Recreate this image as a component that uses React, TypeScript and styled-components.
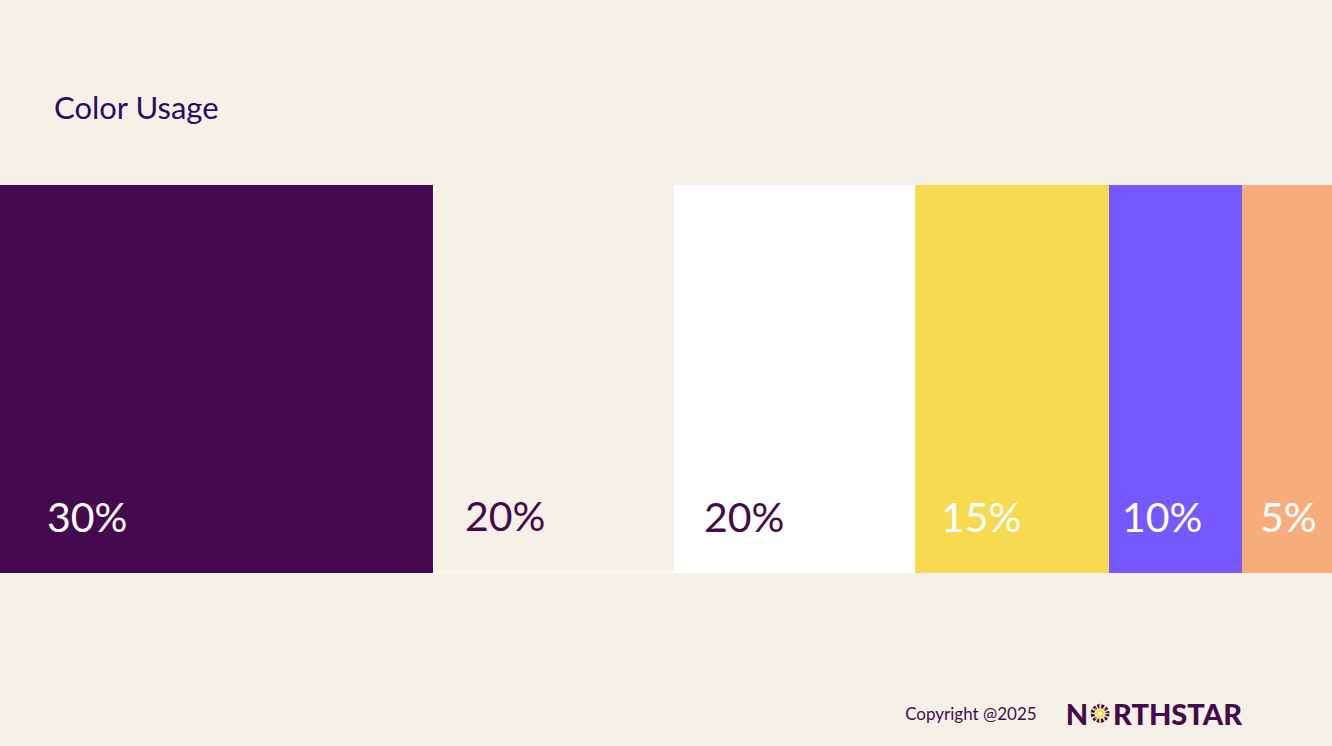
import React from "react";
import styled, { createGlobalStyle } from "styled-components";

const GlobalStyle = createGlobalStyle`
  html, body { margin: 0; padding: 0; background: #f5f1e7; }
  body { font-family: Lato, "Open Sans", sans-serif; }
`;

const Page = styled.div`
  width: 100%;
  height: 746px;
  display: flex;
  flex-direction: column;
  background: #f5f1e7;
  overflow: hidden;
`;

const Header = styled.header`
  height: 185px;
  box-sizing: border-box;
  padding: 89px 0 0 54px;
`;

const Title = styled.h1`
  margin: 0;
  font-family: Lato, sans-serif;
  font-weight: 400;
  font-size: 31px;
  line-height: 1.2;
  color: #2a0b6b;
`;

const Bar = styled.div`
  display: flex;
  height: 388px;
`;

const Segment = styled.div<{ $bg: string; $w: number; $pad: number; $fg: string; $edge?: boolean }>`
  flex: 0 0 ${(p) => p.$w}px;
  box-sizing: border-box;
  background: ${(p) => p.$bg};
  color: ${(p) => p.$fg};
  display: flex;
  align-items: flex-end;
  padding: 0 0 32px ${(p) => p.$pad}px;
  ${(p) => (p.$edge ? "border-left: 1px solid #fbf9f4; border-bottom: 1px solid #fdfcf9;" : "")}
`;

const Label = styled.span`
  font-family: Lato, sans-serif;
  font-size: 41px;
  font-weight: 400;
  line-height: 1.2;
`;

const Footer = styled.footer`
  margin-top: auto;
  display: flex;
  justify-content: flex-end;
  align-items: center;
  gap: 29px;
  padding: 0 90px 18px 0;
`;

const Copyright = styled.span`
  font-family: Lato, sans-serif;
  font-size: 17px;
  color: #45094d;
`;

const Logo = styled.div`
  display: flex;
  align-items: center;
  font-family: Lato, sans-serif;
  font-weight: 900;
  font-size: 29px;
  line-height: 1;
  color: #45094d;
`;

const StarIcon = styled.svg`
  width: 24px;
  height: 29px;
  margin: 0 1px 0 0;
`;

const segments = [
  { bg: "#45094d", fg: "#ffffff", w: 433, pad: 47, label: "30%" },
  { bg: "#f5f1e7", fg: "#45094d", w: 241, pad: 31, label: "20%", edge: true },
  { bg: "#ffffff", fg: "#45094d", w: 241, pad: 30, label: "20%" },
  { bg: "#f8da50", fg: "#ffffff", w: 194, pad: 26, label: "15%" },
  { bg: "#7558fe", fg: "#ffffff", w: 133, pad: 13, label: "10%" },
  { bg: "#f6ad7b", fg: "#ffffff", w: 90, pad: 18, label: "5%" },
];

const Star = () => (
  <StarIcon viewBox="0 0 24 28">
    <circle cx="12" cy="14" r="7.4" fill="none" stroke="#45094d" strokeWidth="4" strokeDasharray="2.6 1.4" />
    <polygon
      fill="#f8da50"
      points="12,0.3 13.2,11.2 18,8 14.8,12.8 23,14 14.8,15.2 18,20 13.2,16.8 12,27.7 10.8,16.8 6,20 9.2,15.2 1,14 9.2,12.8 6,8 10.8,11.2"
    />
    <circle cx="12" cy="14" r="2" fill="#fffbe6" />
  </StarIcon>
);

export default function App() {
  return (
    <>
      <GlobalStyle />
      <Page>
        <Header>
          <Title>Color Usage</Title>
        </Header>
        <Bar>
          {segments.map((s, i) => (
            <Segment key={i} $bg={s.bg} $fg={s.fg} $w={s.w} $pad={s.pad} $edge={s.edge}>
              <Label>{s.label}</Label>
            </Segment>
          ))}
        </Bar>
        <Footer>
          <Copyright>Copyright @2025</Copyright>
          <Logo>
            N<Star />RTHSTAR
          </Logo>
        </Footer>
      </Page>
    </>
  );
}
